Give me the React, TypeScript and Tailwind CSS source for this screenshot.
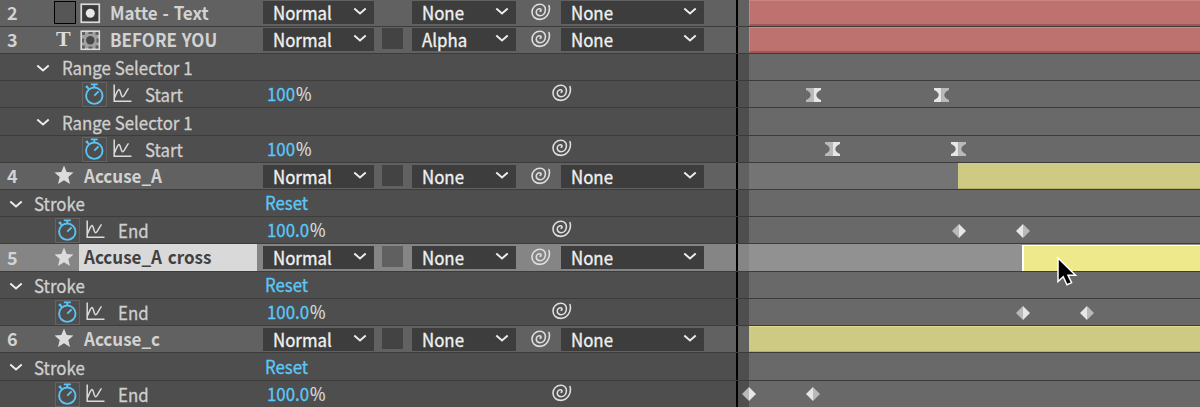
import React from 'react';

type Key = { x: number; kind: 'hourglass' | 'diamond'; lit: 'left' | 'right' };

const Chevron = ({ className = '' }: { className?: string }) => (
  <svg className={`shrink-0 ${className}`} width="14" height="9" viewBox="0 0 14 9" fill="none" stroke="#ececec" strokeWidth="2">
    <path d="M1.3 1.6 L7 6.4 L12.7 1.6" />
  </svg>
);

const Spiral = () => (
  <svg className="shrink-0 -translate-y-px" width="20" height="18" viewBox="0 0 20 18" fill="none" stroke="#dedede" strokeWidth="1.6" strokeLinecap="round" strokeLinejoin="round">
    <path d="M18 2.6 C19.8 9 15.5 16.4 8.8 16.4 C4.3 16.4 1 13.4 1 9 C1 4.6 4.5 1.3 9 1.3 C12.6 1.3 14.6 4 14.4 7 C14.2 10.5 11.8 12.7 9 12.7 C6.8 12.7 5.2 11.2 5.3 9 C5.4 7 7 5.5 8.8 5.7 C10.3 5.9 10.4 7.8 9.2 8.3" />
  </svg>
);

const Stopwatch = () => (
  <div className="flex h-[25px] w-[25px] shrink-0 items-center justify-center border border-[#636363]">
    <svg width="21" height="23" viewBox="0 0 21 23" fill="none" stroke="#5bc4f5" strokeWidth="1.9">
      <circle cx="10.3" cy="12.7" r="8.2" />
      <path d="M6.8 1.4 H13.8 M10.3 1.4 V5 M10.3 12.7 L14.6 8.4 M1.8 4.6 L3.9 2.9 M2.6 3.6 L5 6.2" />
    </svg>
  </div>
);

const Graph = () => (
  <svg className="ml-[6px] shrink-0 -translate-y-px" width="19" height="19" viewBox="0 0 19 19" fill="none" stroke="#dcdcdc" strokeWidth="1.5">
    <path d="M1.2 .5 V17.3 H18.5 M1.5 13.8 C3.6 9 4.6 5.6 6 5.4 C7.6 5.4 7.8 12.8 9.6 12.8 C11.3 12.8 12.6 8 15.5 4.4" />
  </svg>
);

const Star = () => (
  <svg className="shrink-0 -translate-y-px" width="20" height="20" viewBox="0 0 20 20" fill="#dcdcdc">
    <path d="M10 .6 L12.7 7 L19.5 7.5 L14.3 12 L16 18.9 L10 15.2 L4 18.9 L5.7 12 L.5 7.5 L7.3 7 Z" />
  </svg>
);

const MatteIcon = ({ inverted = false }: { inverted?: boolean }) => (
  <svg className="ml-[4px] shrink-0" width="21" height="21" viewBox="0 0 21 21">
    <rect x="1.25" y="1.25" width="18" height="18" fill={inverted ? '#a0a0a0' : '#3b3b3b'} stroke="#dadada" strokeWidth="1.7" />
    {inverted && <path d="M2 2h3v3H2zM15.5 2h3v3h-3zM2 15.5h3v3H2zM15.5 15.5h3v3h-3zM8.5 2h4v2h-4zM8.5 16.5h4v2h-4zM2 8.5h2v4H2zM16.5 8.5h2v4h-2z" fill="#606060" />}
    <circle cx="10.3" cy="10.3" r={inverted ? 4.2 : 4.5} fill={inverted ? '#484848' : '#e8e8e8'} />
  </svg>
);

const Text = ({ children, className = '', bold = false }: { children: React.ReactNode; className?: string; bold?: boolean }) => (
  <span className={`inline-block origin-left leading-none whitespace-nowrap ${bold ? 'scale-x-[.945] font-bold [word-spacing:1px]' : 'scale-x-[.935]'} ${className}`}>{children}</span>
);

const Select = ({ label, className }: { label: string; className: string }) => (
  <div className={`flex h-[23px] shrink-0 items-center justify-between bg-[#3d3d3d] pr-[7px] pl-[10px] text-[#f0f0f0] ${className}`}>
    <Text className="-translate-y-px [-webkit-text-stroke:0.35px_#f0f0f0]">{label}</Text>
    <Chevron className="-translate-y-px" />
  </div>
);

const Controls = ({ matte, toggle = true, selected = false, high = false }: { matte: string; toggle?: boolean; selected?: boolean; high?: boolean }) => (
  <div className={`flex h-[26px] ${high ? 'pt-px' : 'pt-[2px]'}`}>
    <Select label="Normal" className="w-[111px]" />
    <div className="w-[38px] pl-[8px]">
      {toggle && <div className={`h-[21px] w-[21px] ${selected ? 'bg-[#606060]' : 'bg-[#434343]'}`} />}
    </div>
    <Select label={matte} className="w-[104px]" />
    <div className="flex h-[23px] w-[45px] items-center pl-[15px]"><Spiral /></div>
    <Select label="None" className="w-[143px]" />
  </div>
);

const KeyMark = ({ k, top }: { k: Key; top: string }) => {
  const l = k.lit === 'left' ? '#e6e6e6' : '#b9b9b9';
  const r = k.lit === 'right' ? '#e6e6e6' : '#b9b9b9';
  return (
    <svg className={`absolute ${top}`} style={{ left: k.x - 749 - 8 }} width="16" height="16" viewBox="-8 -8 16 16">
      {k.kind === 'diamond' ? (
        <>
          <path d="M0 -7 L-7 0 L0 7Z" fill={l} />
          <path d="M0 -7 L7 0 L0 7Z" fill={r} />
        </>
      ) : (
        <>
          <path d="M.5 -7 H-7 V-5 Q-2.5 -3 -2.3 0 Q-2.5 3 -7 5 V7 H.5Z" fill={l} />
          <path d="M.5 -7 H8 V-5 Q3.5 -3 3.3 0 Q3.5 3 8 5 V7 H.5Z" fill={r} />
        </>
      )}
    </svg>
  );
};

type RowProps = {
  h: string;
  layer?: boolean;
  selected?: boolean;
  left: React.ReactNode;
  right: React.ReactNode;
  bar?: string;
  keys?: Key[];
  keyTop?: string;
};

const Row = ({ h, layer, selected, left, right, bar, keys = [], keyTop = 'top-[6px]' }: RowProps) => {
  const side = selected ? 'bg-[#858585]' : layer ? 'bg-[#616161]' : 'bg-[#4e4e4e]';
  const track = selected ? 'bg-[#919191]' : layer ? 'bg-[#747474]' : 'bg-[#696969]';
  return (
    <div className={`flex w-full shrink-0 border-b border-[#3c3c3c] ${h}`}>
      <div className={`flex w-[736px] shrink-0 ${side}`}>
        <div className="flex w-[263px] shrink-0 items-center">{left}</div>
        <div className="min-w-0 flex-1">{right}</div>
      </div>
      <div className="w-[2px] shrink-0 bg-black" />
      <div className={`w-[11px] shrink-0 ${side}`} />
      <div className={`relative flex min-w-0 flex-1 justify-end ${track}`}>
        {bar && <div className={bar} />}
        {keys.map((k) => <KeyMark key={k.x} k={k} top={keyTop} />)}
      </div>
    </div>
  );
};

const Num = ({ n }: { n: number }) => <span className="w-[54px] shrink-0 -translate-y-px pl-[7px] leading-none font-bold text-[#d2d2d2]">{n}</span>;

const LayerName = ({ children }: { children: string }) => (
  <Text bold className="ml-[9px] -translate-y-px text-[#d2d2d2]">{children}</Text>
);

const ShapeName = ({ n, name, selected = false }: { n: number; name: string; selected?: boolean }) => (
  <>
    <Num n={n} />
    <Star />
    <div className={`ml-[5px] flex h-full items-center pl-[5px] ${selected ? 'w-[178px] bg-[#d9d9d9] text-[#414141]' : 'text-[#d2d2d2]'}`}>
      <Text bold className={selected ? '-translate-y-[2px] [word-spacing:2px]' : '-translate-y-px'}>{name}</Text>
    </div>
  </>
);

const Group = ({ name, nested = false }: { name: string; nested?: boolean }) => (
  <>
    <Chevron className={nested ? 'ml-[36px] translate-y-px' : 'ml-[9px] translate-y-px'} />
    <Text className={`text-[#cfcfcf] [-webkit-text-stroke:0.3px_#cfcfcf] ${nested ? 'ml-[12px]' : 'ml-[11px]'}`}>{name}</Text>
  </>
);

const Prop = ({ name, nested = false }: { name: string; nested?: boolean }) => (
  <div className={`flex items-center ${nested ? 'pl-[82px]' : 'pl-[55px]'}`}>
    <Stopwatch />
    <Graph />
    <Text className="ml-[13px] text-[#cfcfcf] [-webkit-text-stroke:0.3px_#cfcfcf]">{name}</Text>
  </div>
);

const Value = ({ v }: { v: string }) => (
  <div className="flex h-full items-center">
    <div className="w-[289px] pl-[4px] text-[#dcdcdc]">
      <Text className="-translate-y-px"><span className="text-[#5bc8fa] [-webkit-text-stroke:0.3px_#5bc8fa]">{v}</span><span className="ml-px [-webkit-text-stroke:0.2px_#dcdcdc]">%</span></Text>
    </div>
    <Spiral />
  </div>
);

const Reset = () => (
  <div className="flex h-full items-center pl-[2px] text-[#5bc8fa]">
    <Text className="-translate-y-px [-webkit-text-stroke:0.3px_#5bc8fa]">Reset</Text>
  </div>
);

const red = 'w-full border-t border-b-2 border-l border-t-[#c98684] border-b-[#9f5654] border-l-[#c98684] bg-[#be7270]';
const olive = 'border-b border-b-[#b4ae69] bg-[#cfca83]';

export default function App() {
  return (
    <div className="relative flex h-[407px] w-[1200px] flex-col overflow-hidden bg-[#4e4e4e] font-['Noto_Sans_CJK_SC','Noto_Sans',sans-serif] text-[18px]">
      <Row h="h-[27px]" layer bar={red}
        left={<><Num n={2} /><div className="h-[23px] w-[22px] -translate-y-px border border-black bg-[#565656]" /><MatteIcon /><LayerName>Matte - Text</LayerName></>}
        right={<Controls matte="None" toggle={false} high />} />
      <Row h="h-[27px]" layer bar={red}
        left={<><Num n={3} /><span className="w-[22px] -translate-y-px pl-[2px] font-['Liberation_Serif',serif] text-[22px] leading-none font-bold text-[#dcdcdc]">T</span><MatteIcon inverted /><LayerName>BEFORE YOU</LayerName></>}
        right={<Controls matte="Alpha" high />} />
      <Row h="h-[27px]" left={<Group name="Range Selector 1" nested />} right={null} />
      <Row h="h-[27px]" left={<Prop name="Start" nested />} right={<Value v="100" />}
        keys={[{ x: 813, kind: 'hourglass', lit: 'right' }, { x: 941, kind: 'hourglass', lit: 'left' }]} />
      <Row h="h-[28px]" left={<Group name="Range Selector 1" nested />} right={null} />
      <Row h="h-[27px]" left={<Prop name="Start" nested />} right={<Value v="100" />} keyTop="top-[5px]"
        keys={[{ x: 832, kind: 'hourglass', lit: 'right' }, { x: 958, kind: 'hourglass', lit: 'left' }]} />
      <Row h="h-[27px]" layer bar={`w-[242px] ${olive}`} left={<ShapeName n={4} name="Accuse_A" />} right={<Controls matte="None" />} />
      <Row h="h-[27px]" left={<Group name="Stroke" />} right={<Reset />} />
      <Row h="h-[27px]" left={<Prop name="End" />} right={<Value v="100.0" />}
        keys={[{ x: 959, kind: 'diamond', lit: 'right' }, { x: 1023, kind: 'diamond', lit: 'left' }]} />
      <Row h="h-[28px]" layer selected bar="mt-px w-[178px] border-t border-l-2 border-white bg-[#eee98a]"
        left={<ShapeName n={5} name="Accuse_A cross" selected />} right={<Controls matte="None" selected />} />
      <Row h="h-[27px]" left={<Group name="Stroke" />} right={<Reset />} />
      <Row h="h-[27px]" left={<Prop name="End" />} right={<Value v="100.0" />}
        keys={[{ x: 1023, kind: 'diamond', lit: 'right' }, { x: 1087, kind: 'diamond', lit: 'left' }]} />
      <Row h="h-[27px]" layer bar={`w-full border-t border-t-[#e0db91] ${olive}`} left={<ShapeName n={6} name="Accuse_c" />} right={<Controls matte="None" />} />
      <Row h="h-[28px]" left={<Group name="Stroke" />} right={<Reset />} />
      <Row h="h-[27px]" left={<Prop name="End" />} right={<Value v="100.0" />} keyTop="top-[5px]"
        keys={[{ x: 749, kind: 'diamond', lit: 'right' }, { x: 813, kind: 'diamond', lit: 'left' }]} />
      <svg className="absolute top-[255px] left-[1055px]" width="24" height="32" viewBox="0 0 24 32">
        <path d="M3 3 V26.5 L8.2 21.8 L12 29.8 L16.6 27.7 L13 20.2 H20.5 Z" fill="#000" stroke="#fff" strokeWidth="1.5" />
      </svg>
    </div>
  );
}
